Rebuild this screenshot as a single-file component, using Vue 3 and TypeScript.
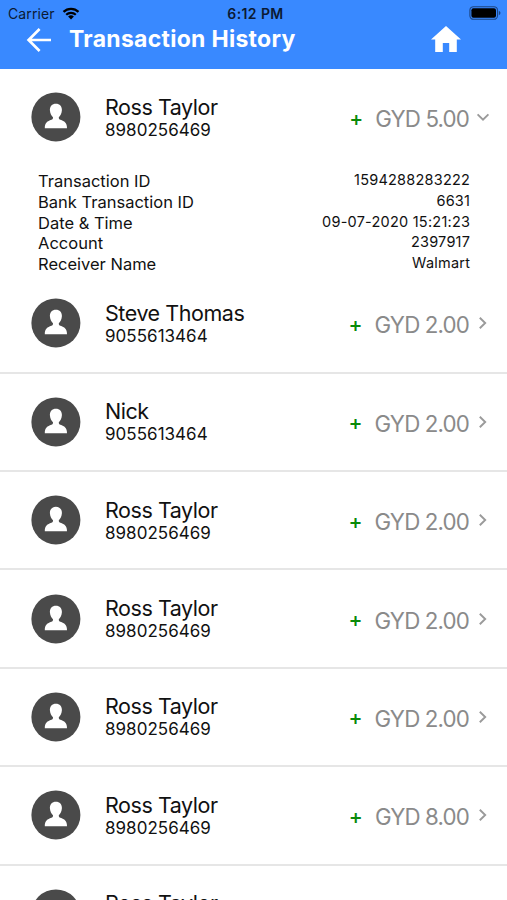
<script setup lang="ts">
import { ref } from 'vue'

interface Detail {
  label: string
  value: string
}

interface Transaction {
  id: number
  name: string
  phone: string
  amount: string
  details: Detail[]
}

const walmart: Detail[] = [
  { label: 'Transaction ID', value: '1594288283222' },
  { label: 'Bank Transaction ID', value: '6631' },
  { label: 'Date & Time', value: '09-07-2020 15:21:23' },
  { label: 'Account', value: '2397917' },
  { label: 'Receiver Name', value: 'Walmart' },
]

const transactions: Transaction[] = [
  { id: 1, name: 'Ross Taylor', phone: '8980256469', amount: 'GYD 5.00', details: walmart },
  { id: 2, name: 'Steve Thomas', phone: '9055613464', amount: 'GYD 2.00', details: [] },
  { id: 3, name: 'Nick', phone: '9055613464', amount: 'GYD 2.00', details: [] },
  { id: 4, name: 'Ross Taylor', phone: '8980256469', amount: 'GYD 2.00', details: [] },
  { id: 5, name: 'Ross Taylor', phone: '8980256469', amount: 'GYD 2.00', details: [] },
  { id: 6, name: 'Ross Taylor', phone: '8980256469', amount: 'GYD 2.00', details: [] },
  { id: 7, name: 'Ross Taylor', phone: '8980256469', amount: 'GYD 8.00', details: [] },
  { id: 8, name: 'Ross Taylor', phone: '', amount: '', details: [] },
]

const openId = ref<number>(1)

function toggle(id: number): void {
  openId.value = openId.value === id ? 0 : id
}
</script>

<template>
  <main class="screen">
    <header class="header">
      <div class="status">
        <div class="carrier">
          <span>Carrier</span>
          <svg class="wifi" width="18" height="13" viewBox="0 0 18 13">
            <path d="M1.5 4.9 A10.8 10.8 0 0 1 16.5 4.9" />
            <path d="M4.2 7.7 A7 7 0 0 1 13.8 7.7" />
            <path class="dot" d="M6.1 9.6 A4.2 4.2 0 0 1 11.9 9.6 L9 12.5 Z" />
          </svg>
        </div>
        <span class="clock">6:12 PM</span>
        <svg class="battery" width="32" height="14" viewBox="0 0 32 14">
          <rect class="shell" x="0.9" y="0.7" width="27.6" height="12.6" rx="3.6" />
          <rect x="2.4" y="2.2" width="24.6" height="9.6" rx="2" />
          <path class="cap" d="M29.8 4.8 Q31.5 5.5 31.5 7 Q31.5 8.5 29.8 9.2 Z" />
        </svg>
      </div>
      <div class="bar">
        <svg class="back" width="26" height="26" viewBox="0 0 26 26">
          <path d="M25 13 H3 M13.6 2 L2.6 13 L13.6 24" />
        </svg>
        <h1 class="title">Transaction History</h1>
        <svg class="home" width="30" height="26" viewBox="0 0 30 26">
          <path d="M15 0 L30 13.4 H25.8 V26 H18.2 V17 H11.8 V26 H4.2 V13.4 H0 Z" />
        </svg>
      </div>
    </header>

    <section v-for="t in transactions" :key="t.id" class="entry">
      <div class="row" :class="{ open: openId === t.id }" @click="toggle(t.id)">
        <svg class="avatar" width="50" height="50" viewBox="0 0 50 50">
          <circle cx="24.9" cy="24.9" r="24.5" />
          <path
            transform="translate(0.4 0.4)"
            d="M24.5 11.3 C28.3 11.3 30.7 14 30.5 17.9 C30.3 21.3 28.9 23.6 27.4 24.8 C27.3 26.6 27.9 27 29 27.4 C33 28.8 35.6 30.3 35.6 35.9 H13.4 C13.4 30.3 16 28.8 20 27.4 C21.1 27 21.7 26.6 21.6 24.8 C20.1 23.6 18.7 21.3 18.5 17.9 C18.3 14 20.7 11.3 24.5 11.3 Z"
          />
        </svg>
        <div class="person">
          <span class="name">{{ t.name }}</span>
          <span class="phone">{{ t.phone }}</span>
        </div>
        <div v-if="t.amount" class="money">
          <span class="plus">+</span>
          <span class="amount">{{ t.amount }}</span>
          <svg class="chevron" width="14" height="14" viewBox="0 0 14 14">
            <path v-if="openId === t.id" d="M1.6 4.4 L7 9.6 L12.4 4.4" />
            <path v-else d="M3.8 1.8 L9.2 7 L3.8 12.2" />
          </svg>
        </div>
      </div>
      <dl v-if="openId === t.id" class="details">
        <div v-for="d in t.details" :key="d.label" class="line">
          <dt>{{ d.label }}</dt>
          <dd>{{ d.value }}</dd>
        </div>
      </dl>
    </section>
  </main>
</template>

<style>
body {
  background: #fff;
}
</style>

<style scoped>
.screen {
  height: 900px;
  overflow: hidden;
  background: #fff;
  color: #111;
  font-family: Inter, 'Liberation Sans', sans-serif;
}
.header {
  box-sizing: border-box;
  height: 69.3px;
  background: #3989ff;
}
.status {
  display: grid;
  grid-template-columns: 1fr auto 1fr;
  align-items: center;
  height: 26px;
  padding: 1px 6px 0 8px;
  box-sizing: border-box;
  color: #0b1a33;
  font-size: 14px;
}
.carrier {
  display: flex;
  align-items: center;
  gap: 7px;
  letter-spacing: 0.1px;
}
.wifi {
  margin-top: -1px;
  fill: none;
  stroke: #000;
  stroke-width: 2.2;
}
.wifi .dot {
  fill: #000;
  stroke: none;
}
.clock {
  padding-left: 2px;
  font-weight: 600;
  font-size: 14px;
  letter-spacing: 0.4px;
}
.battery {
  justify-self: end;
  margin-top: -1px;
}
.battery .shell {
  fill: none;
  stroke: #1d4582;
  stroke-width: 1.1;
}
.battery .cap {
  fill: #1d4582;
}
.bar {
  display: flex;
  align-items: center;
  height: 28px;
  padding: 0 46px 0 26px;
}
.back {
  fill: none;
  stroke: #fff;
  stroke-width: 2.7;
}
.title {
  margin: -2px 0 0 17px;
  color: #fff;
  font-size: 23px;
  line-height: 28px;
  font-weight: 700;
  letter-spacing: 0.28px;
  white-space: nowrap;
}
.home {
  margin: -2px 0 0 auto;
  fill: #fff;
}
.row {
  display: flex;
  align-items: center;
  box-sizing: border-box;
  height: 98.4px;
  padding: 0 17px 0 31px;
  border-bottom: 2px solid #e6e6e6;
}
.row.open {
  border-bottom-color: transparent;
}
.avatar {
  flex: none;
  fill: #4a4a4a;
}
.avatar path {
  fill: #fff;
}
.person {
  display: flex;
  flex-direction: column;
  margin: 0 0 0 24px;
}
.name {
  font-size: 21.5px;
  line-height: 25px;
  letter-spacing: -0.45px;
}
.phone {
  min-height: 20px;
  font-size: 17px;
  line-height: 20px;
  letter-spacing: 0.03px;
}
.money {
  display: flex;
  align-items: center;
  margin-left: auto;
  padding-top: 4px;
}
.plus {
  margin: -2px 12px 0 0;
  color: #0a8a0a;
  font-size: 21px;
  font-weight: 500;
}
.amount {
  color: #8a8a8a;
  font-size: 22.3px;
  line-height: 28px;
  letter-spacing: -0.85px;
}
.chevron {
  margin: -4px 0 0 7px;
  fill: none;
  stroke: #9a9a9a;
  stroke-width: 1.9;
}
.details {
  height: 107.5px;
  box-sizing: border-box;
  margin: 0;
  padding: 3.4px 37px 0 38px;
}
.line {
  display: flex;
  justify-content: space-between;
  height: 20.75px;
  line-height: 20.75px;
}
dt {
  font-size: 16.5px;
}
dd {
  margin: -1px -0.2px 0 0;
  font-size: 14.5px;
  letter-spacing: 0.23px;
}
</style>
